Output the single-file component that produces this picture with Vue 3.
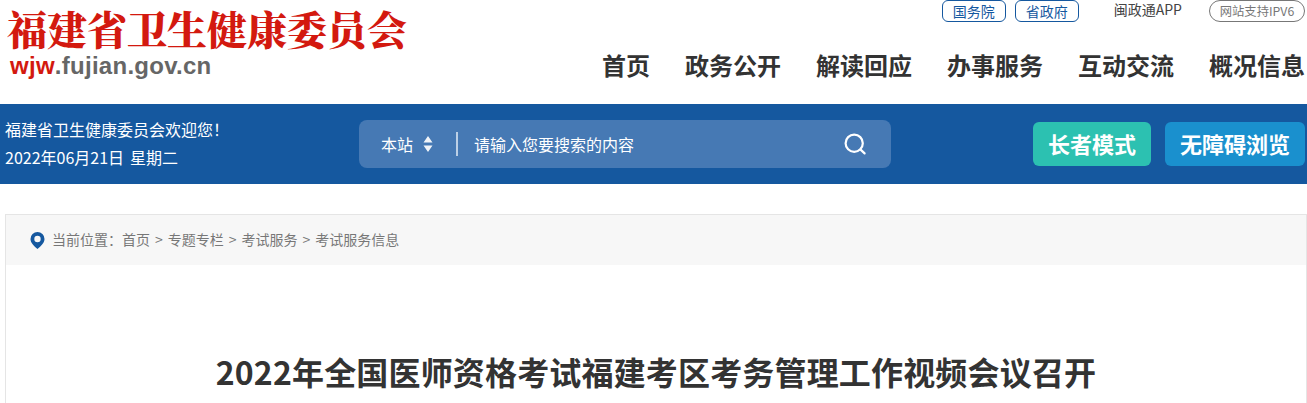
<script setup>
const nav = ['首页', '政务公开', '解读回应', '办事服务', '互动交流', '概况信息']
const crumbs = ['专题专栏', '考试服务', '考试服务信息']
</script>

<template>
  <div class="page">
    <header class="head">
      <div class="brand">
        <div class="logo-cn">福建省卫生健康委员会</div>
        <div class="logo-en"><b>wjw</b>.fujian.gov.cn</div>
      </div>
      <div class="head-right">
        <div class="top-links">
          <a class="pill">国务院</a>
          <a class="pill second">省政府</a>
          <span class="app">闽政通APP</span>
          <span class="ipv6">网站支持IPV6</span>
        </div>
        <nav class="nav">
          <a v-for="n in nav" :key="n">{{ n }}</a>
        </nav>
      </div>
    </header>

    <section class="bar">
      <div class="welcome">
        <div>福建省卫生健康委员会欢迎您！</div>
        <div class="date">2022年06月21日<span class="week">星期二</span></div>
      </div>
      <div class="search">
        <span class="scope">本站</span>
        <svg class="updown" width="10" height="18" viewBox="0 0 10 18">
          <path d="M5 1 9.500 7.500H.5z M5 17 .5 10.500h9z" fill="#fff" opacity=".92" />
        </svg>
        <i class="divider"></i>
        <span class="placeholder">请输入您要搜索的内容</span>
        <svg class="glass" width="24" height="24" viewBox="0 0 24 24" fill="none" stroke="#fff" stroke-width="2.2" stroke-linecap="round">
          <circle cx="11.2" cy="11.2" r="8.600" />
          <path d="M17.600 17.600 21.600 21.400" />
        </svg>
      </div>
      <div class="modes">
        <a class="mode green">长者模式</a>
        <a class="mode sky">无障碍浏览</a>
      </div>
    </section>

    <main class="box">
      <div class="crumb">
        <svg width="15" height="17" viewBox="0 0 15 17">
          <path fill-rule="evenodd" fill="#15589f" d="M7.500 0a7 7 0 0 1 7 7c0 4-4 7.600-7 10-3-2.400-7-6-7-10a7 7 0 0 1 7-7zm0 3.800a3.200 3.200 0 1 0 0 6.400 3.200 3.200 0 0 0 0-6.400z" />
        </svg>
        <span class="crumb-text">当前位置：首页<template v-for="c in crumbs" :key="c"><span class="sep">&gt;</span>{{ c }}</template></span>
      </div>
      <h1 class="title">2022年全国医师资格考试福建考区考务管理工作视频会议召开</h1>
    </main>
  </div>
</template>

<style>
html, body { margin: 0; background: #fff; overflow: hidden; }
</style>

<style scoped>
.page {
  width: 1307px;
  height: 403px;
  overflow: hidden;
  font-family: "Noto Sans CJK SC", "Microsoft YaHei", sans-serif;
  color: #333;
}
.head {
  height: 104px;
  display: flex;
  justify-content: space-between;
  box-sizing: border-box;
  padding: 0 2px 0 7px;
}
.logo-cn {
  font-family: "Noto Serif CJK SC", "Source Han Serif SC", serif;
  font-weight: 900;
  font-size: 40px;
  line-height: 40px;
  color: #d3190f;
  margin-top: 8px;
  white-space: nowrap;
}
.logo-en {
  font-family: "Liberation Sans", Arial, sans-serif;
  font-size: 24px;
  line-height: 28px;
  font-weight: 700;
  letter-spacing: .27px;
  margin: 4px 0 0 3px;
  color: #666;
}
.logo-en b { color: #d3190f; }
.head-right {
  display: flex;
  flex-direction: column;
  align-items: flex-end;
}
.top-links {
  height: 22px;
  display: flex;
  align-items: flex-start;
}
.pill {
  width: 64px;
  height: 22px;
  box-sizing: border-box;
  border: 1px solid #15589f;
  border-radius: 6px;
  text-align: center;
  font-size: 14px;
  line-height: 20px;
  color: #15589f;
}
.second { margin-left: 9px; }
.app {
  margin: 0 27px 0 35px;
  font-size: 14px;
  line-height: 19px;
  color: #444;
}
.ipv6 {
  width: 96px;
  height: 22px;
  box-sizing: border-box;
  border: 1px solid #777;
  border-radius: 11px;
  text-align: center;
  font-size: 12.300px;
  line-height: 21px;
  white-space: nowrap;
  color: #777;
}
.nav {
  margin-top: 25px;
  display: flex;
  gap: 35px;
  font-size: 24px;
  line-height: 36px;
  font-weight: 700;
  color: #333;
}
.bar {
  height: 80px;
  background: #15589f;
  display: flex;
  align-items: center;
  color: #fff;
  padding: 0 2px 0 5px;
}
.welcome {
  width: 354px;
  font-size: 16px;
  line-height: 28px;
  margin-top: -3px;
}
.week { margin-left: 6px; }
.search {
  width: 532px;
  height: 48px;
  box-sizing: border-box;
  padding: 0 24px 0 22px;
  border-radius: 8px;
  background: #4679b4;
  display: flex;
  align-items: center;
  font-size: 16px;
}
.scope { margin-right: 10px; }
.divider {
  width: 2px;
  height: 24px;
  margin: 0 16px 0 23px;
  background: #bcd0e6;
}
.placeholder { flex: 1; }
.modes {
  margin-left: auto;
  display: flex;
  gap: 14px;
}
.mode {
  height: 44px;
  border-radius: 6px;
  text-align: center;
  font-size: 22px;
  line-height: 43px;
  font-weight: 700;
  color: #fff;
}
.green { width: 118px; background: #2cc1b1; }
.sky { width: 140px; background: #1a90ce; }
.box {
  margin: 30px 0 0 5px;
  border: 1px solid #e5e5e5;
  border-bottom: 0;
  height: 300px;
}
.crumb {
  height: 50px;
  background: #f7f7f7;
  display: flex;
  align-items: center;
  padding-left: 24px;
  font-size: 14px;
  color: #777;
}
.crumb-text { margin-left: 7px; margin-top: -2px; }
.sep { margin: 0 5px; }
.title {
  margin: 83px 0 0;
  text-align: center;
  font-size: 32px;
  line-height: 46px;
  letter-spacing: .17px;
  font-weight: 700;
  color: #333;
}
</style>
